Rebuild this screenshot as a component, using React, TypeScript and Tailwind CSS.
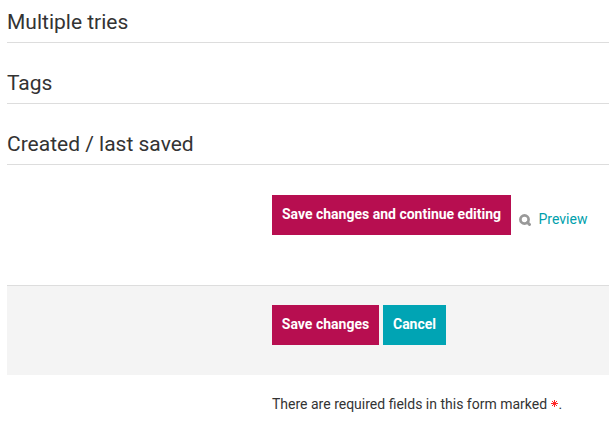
function Section({ title, first }: { title: string; first?: boolean }) {
  return (
    <h3 className={`border-b border-[#dddddd] text-[21px] ${first ? "h-[43px] pt-1.5" : "h-[61px] pt-6"} leading-8`}>
      {title}
    </h3>
  );
}

const button = "h-10 pb-0.5 text-sm font-bold whitespace-nowrap text-white";

export default function App() {
  return (
    <main className="h-[423px] overflow-hidden bg-white pl-[7px] font-['Roboto',sans-serif] text-[#333333]">
      <Section title="Multiple tries" first />
      <Section title="Tags" />
      <Section title="Created / last saved" />
      <div className="flex h-[120px] items-start pt-[30px] pl-[265px]">
        <button className={`${button} w-[239px] shrink-0 bg-[#b70e50]`}>Save changes and continue editing</button>
        <a className="mt-3.5 ml-2 flex items-start text-sm leading-5 text-[#009fac]">
          <svg className="mt-[5px] mr-[7.5px] h-3 w-3 shrink-0" viewBox="0 0 12 12" fill="none" stroke="#999999">
            <circle cx="5.5" cy="5.5" r="4.1" strokeWidth="2.7" />
            <path d="m8.5 8.5 2 2" strokeWidth="3" strokeLinecap="round" />
          </svg>
          Preview
        </a>
      </div>
      <div className="flex h-[90px] gap-1 border-t border-[#dddddd] bg-[#f4f4f4] pt-[19px] pl-[265px]">
        <button className={`${button} w-[107px] bg-[#b70e50]`}>Save changes</button>
        <button className={`${button} w-[63px] bg-[#00a4b4]`}>Cancel</button>
      </div>
      <p className="flex pt-[19px] pl-[265px] text-sm leading-5 whitespace-pre">
        There are required fields in this form marked{" "}
        <svg className="mt-1.5 h-[7px] w-[7px]" viewBox="0 0 7 7" stroke="#ff2626" strokeWidth="1" aria-label="Required">
          <path d="M3.5 0v7M0 3.5h7M1 1l5 5M6 1 1 6" />
        </svg>
        <span className="ml-px">.</span>
      </p>
    </main>
  );
}
